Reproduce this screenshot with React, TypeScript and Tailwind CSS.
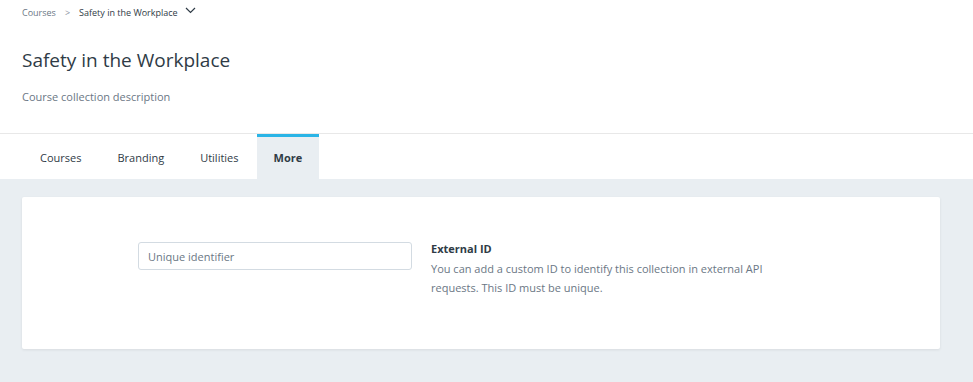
import React from "react";

const TABS = ["Courses", "Branding", "Utilities", "More"];

export default function App() {
  const active = "More";
  return (
    <div className="min-h-[382px] w-full bg-white text-[#2f3b46]" style={{ fontFamily: '"Open Sans", sans-serif' }}>
      <header className="px-[22px] pt-[7px]">
        <nav className="flex items-center h-[12px] text-[9px] leading-[12px]">
          <span className="text-[#6b7785]">Courses</span>
          <span className="mx-[9px] text-[#8a949e]">&gt;</span>
          <span className="text-[#2f3b46]">Safety in the Workplace</span>
          <svg className="ml-[7px] -mt-[5px]" width="11" height="7" viewBox="0 0 11 7" fill="none">
            <path d="M1 1l4.5 4.5L10 1" stroke="#2f3b46" strokeWidth="1.2" />
          </svg>
        </nav>
        <h1 className="mt-[29px] text-[19px] leading-[24px] font-normal">Safety in the Workplace</h1>
        <p className="mt-[18px] text-[11px] leading-[14px] text-[#6b7785]">Course collection description</p>
      </header>

      <div className="mt-[29px] border-t border-[#e8e8e8] px-[22px] flex h-[46px]">
        {TABS.map((t) => (
          <div
            key={t}
            className={
              t === active
                ? "flex items-center px-[17px] bg-[#e9eef2] border-t-[3px] border-[#2ab4e6] font-bold text-[11px] text-[#2f3b46]"
                : "flex items-center px-[18px] pt-[3px] text-[11px] text-[#2f3b46]"
            }
          >
            {t}
          </div>
        ))}
      </div>

      <main className="bg-[#e9eef2] px-[22px] pt-[18px] pb-[33px] pr-[33px]">
        <section className="bg-white rounded-[2px] shadow-[0_1px_3px_rgba(0,0,0,0.08)] h-[152px] flex items-start pt-[45px] pl-[116px]">
          <input
            className="w-[274px] h-[28px] border border-[#d3dbe2] rounded-[3px] px-[9px] text-[11px] text-[#2f3b46] placeholder:text-[#6b7785] outline-none"
            placeholder="Unique identifier"
          />
          <div className="ml-[19px] w-[360px]">
            <div className="text-[11px] leading-[14px] font-bold">External ID</div>
            <p className="mt-[3px] text-[11px] leading-[19px] text-[#6b7785]">
              You can add a custom ID to identify this collection in external API requests. This ID must be unique.
            </p>
          </div>
        </section>
      </main>
    </div>
  );
}
